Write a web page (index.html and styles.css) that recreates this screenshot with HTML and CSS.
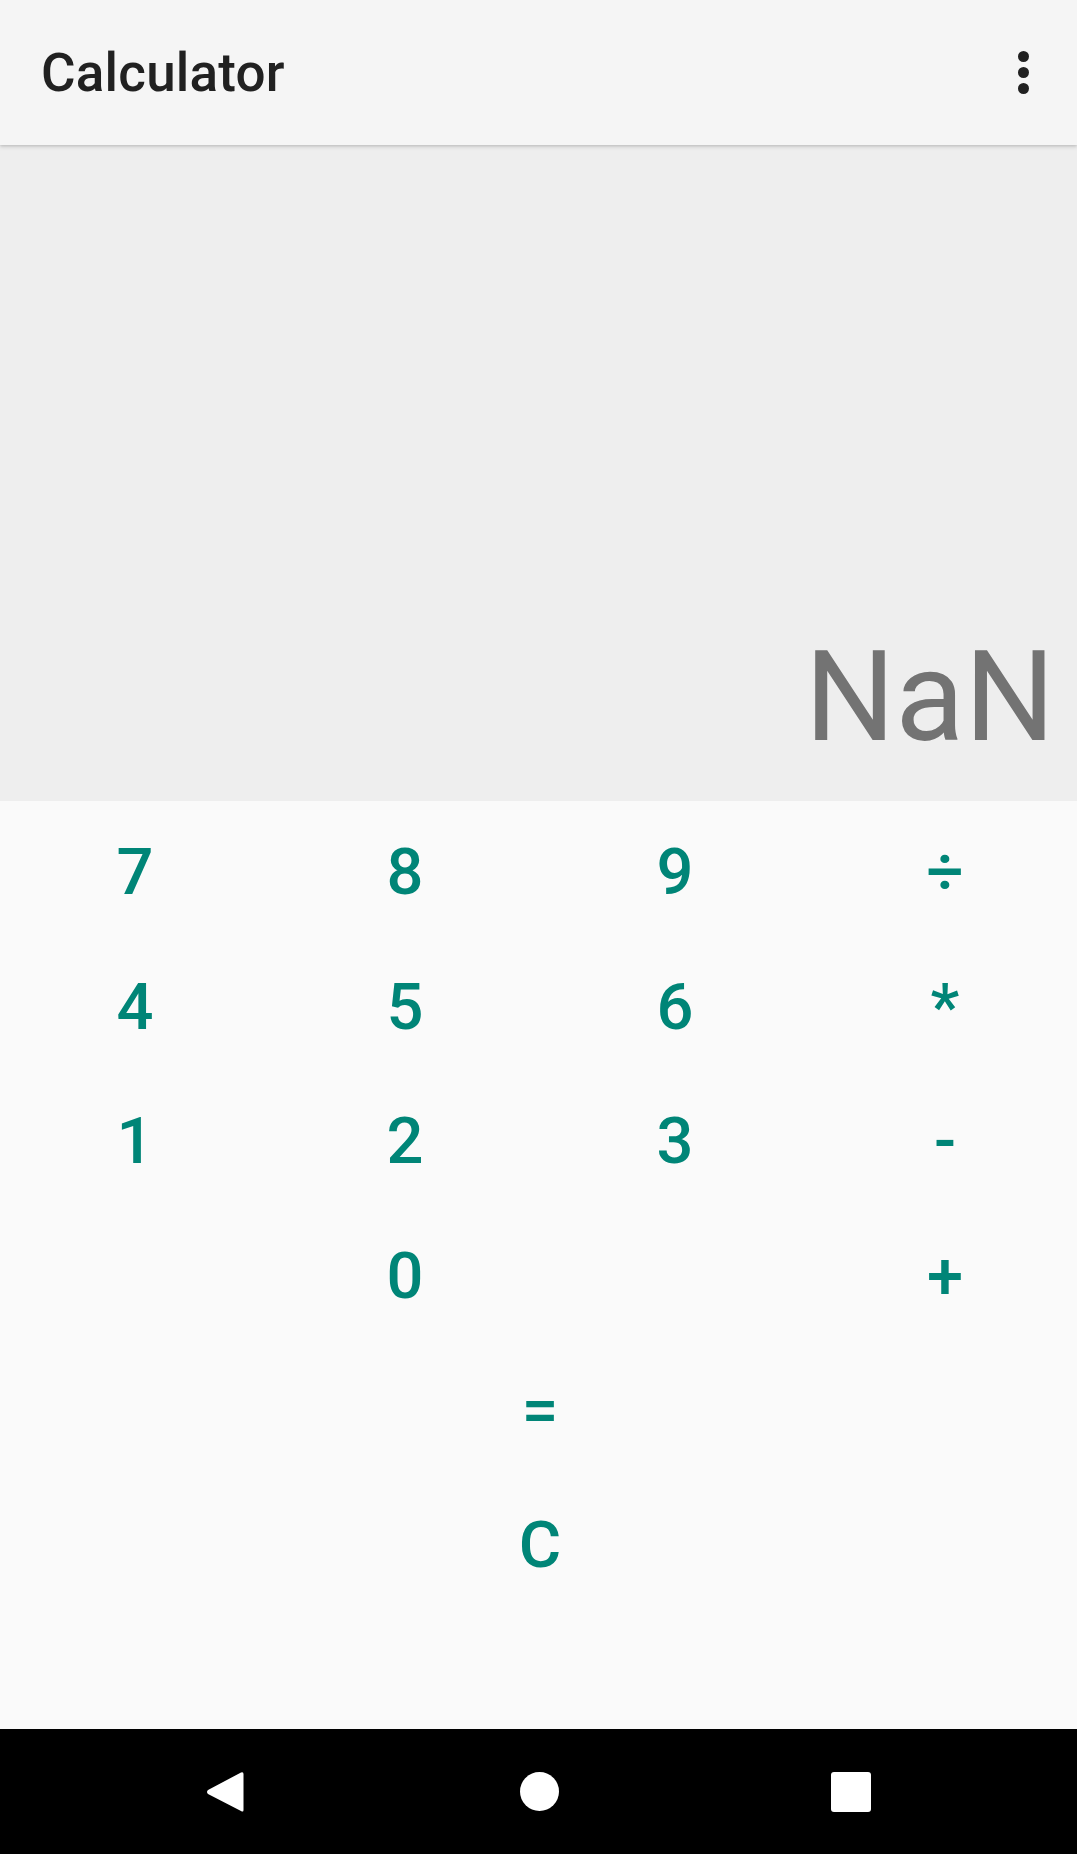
FILE: index.html
```html
<!DOCTYPE html>
<html>
<head>
<meta charset="utf-8">
<link rel="stylesheet" href="styles.css">
</head>
<body>
<div class="screen">
  <header class="appbar">
    <span class="title">Calculator</span>
    <div class="kebab"><span></span><span></span><span></span></div>
  </header>
  <section class="display">
    <div class="result">NaN</div>
  </section>
  <section class="keypad">
    <div class="row">
      <div class="key">7</div><div class="key">8</div><div class="key">9</div><div class="key">÷</div>
    </div>
    <div class="row">
      <div class="key">4</div><div class="key">5</div><div class="key">6</div><div class="key">*</div>
    </div>
    <div class="row">
      <div class="key">1</div><div class="key">2</div><div class="key">3</div><div class="key">-</div>
    </div>
    <div class="row">
      <div class="key"></div><div class="key">0</div><div class="key"></div><div class="key">+</div>
    </div>
    <div class="row">
      <div class="key wide">=</div>
    </div>
    <div class="row">
      <div class="key wide">C</div>
    </div>
  </section>
  <nav class="navbar">
    <svg class="nav-back" width="38" height="42" viewBox="0 0 38 42"><path d="M35 1.5 Q37.5 0.5 37.5 3 V39 Q37.5 41.5 35 40 L2 23 Q0 21 2 19 Z" fill="#fff"/></svg>
    <svg class="nav-home" width="39" height="39" viewBox="0 0 39 39"><circle cx="19.5" cy="19.5" r="19.5" fill="#fff"/></svg>
    <svg class="nav-recent" width="40" height="40" viewBox="0 0 40 40"><rect x="0" y="0" width="40" height="40" rx="3" fill="#fff"/></svg>
  </nav>
</div>
</body>
</html>
```

FILE: styles.css
```css
html, body {
  margin: 0;
  padding: 0;
}
body {
  font-family: Roboto, "Noto Sans", sans-serif;
  background: #fafafa;
}
.screen {
  width: 1077px;
  height: 1854px;
  display: flex;
  flex-direction: column;
  overflow: hidden;
}
.appbar {
  height: 145px;
  flex: none;
  background: #f5f5f5;
  display: flex;
  align-items: center;
  justify-content: space-between;
  padding: 0 48px 0 41px;
  box-sizing: border-box;
  position: relative;
  z-index: 2;
  box-shadow: 0 2px 4px rgba(0,0,0,0.14), 0 1px 2px rgba(0,0,0,0.08);
}
.title {
  font-size: 53px;
  font-weight: 500;
  color: #212121;
  letter-spacing: 0.2px;
}
.kebab {
  display: flex;
  flex-direction: column;
  gap: 5px;
}
.kebab span {
  width: 11px;
  height: 11px;
  border-radius: 50%;
  background: #212121;
}
.display {
  height: 656px;
  flex: none;
  background: #eeeeee;
  display: flex;
  flex-direction: column;
  justify-content: flex-end;
  align-items: flex-end;
  padding: 0 22px 30px 0;
  box-sizing: border-box;
}
.result {
  font-size: 127px;
  font-weight: 400;
  color: #737373;
  line-height: normal;
}
.keypad {
  flex: 1;
  background: #fafafa;
  padding-top: 4px;
  display: flex;
  flex-direction: column;
}
.row {
  height: 134.5px;
  width: 1080px;
  display: flex;
}
.key {
  flex: 1;
  display: flex;
  align-items: center;
  justify-content: center;
  font-size: 65px;
  font-weight: 500;
  color: #008577;
}
.navbar {
  height: 125px;
  flex: none;
  background: #000;
  display: flex;
  align-items: center;
  padding: 0 0 0 206px;
}
.nav-home { margin-left: 276px; }
.nav-recent { margin-left: 272px; }
```
